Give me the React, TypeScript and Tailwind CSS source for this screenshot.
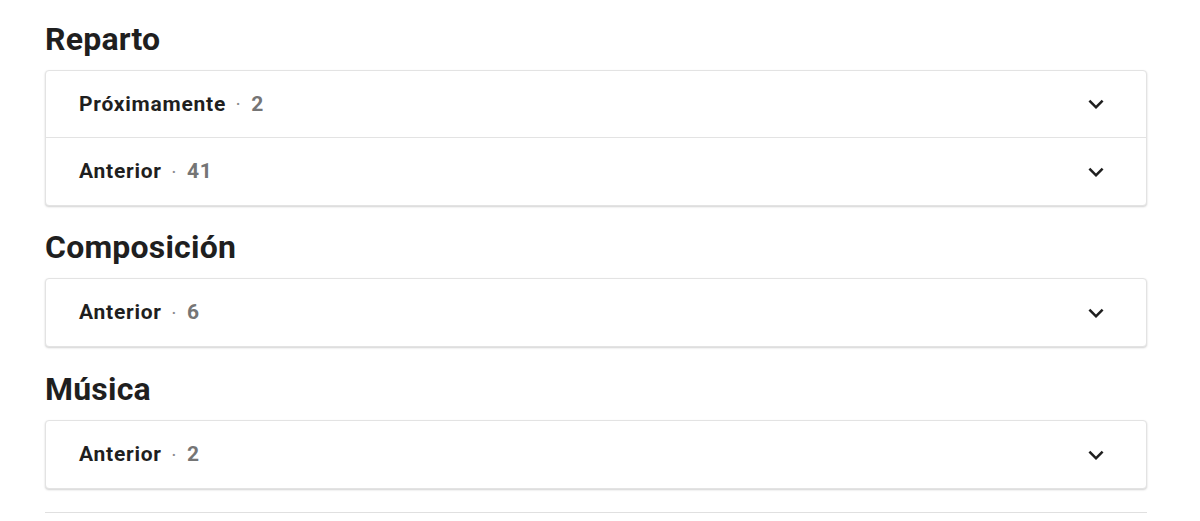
import React from "react";

const Chevron = () => (
  <svg width="30" height="30" viewBox="0 0 24 24" fill="#1f1f1f" aria-hidden="true">
    <path d="M16.59 8.59L12 13.17 7.41 8.59 6 10l6 6 6-6z" />
  </svg>
);

const Row = ({ label, count, last }: { label: string; count: number; last?: boolean }) => (
  <div
    className={`flex h-[67px] items-center justify-between pl-[33px] pr-[35px] ${last ? "" : "border-b border-[#e3e3e3]"}`}
  >
    <div className="flex items-center text-[21px] font-bold leading-none tracking-[0.75px]">
      <span className="text-[#1f1f1f]">{label}</span>
      <span className="ml-[10px] mr-[11px] text-[14px] tracking-normal text-[#8a8a8a]">·</span>
      <span className="text-[#757575]">{count}</span>
    </div>
    <Chevron />
  </div>
);

const Section = ({
  title,
  rows,
  className,
}: {
  title: string;
  rows: { label: string; count: number }[];
  className?: string;
}) => (
  <section className={className}>
    <h3 className="text-[32px] font-bold leading-[40px] text-[#1f1f1f] tracking-[0.2px]">{title}</h3>
    <div className="mt-[11px] rounded-[4px] border border-[#e3e3e3] bg-white shadow-[0_1px_2px_rgba(0,0,0,0.18)]">
      {rows.map((r, i) => (
        <Row key={i} label={r.label} count={r.count} last={i === rows.length - 1} />
      ))}
    </div>
  </section>
);

export default function App() {
  return (
    <div
      className="min-h-[521px] bg-white pl-[45px] pr-[53px] pt-[19px]"
      style={{ fontFamily: "Roboto, 'Liberation Sans', sans-serif" }}
    >
      <Section
        title="Reparto"
        rows={[
          { label: "Próximamente", count: 2 },
          { label: "Anterior", count: 41 },
        ]}
      />
      <Section title="Composición" className="mt-[21px]" rows={[{ label: "Anterior", count: 6 }]} />
      <Section title="Música" className="mt-[22px]" rows={[{ label: "Anterior", count: 2 }]} />
      <div className="mt-[23px] h-px bg-[#e0e0e0]" />
    </div>
  );
}
